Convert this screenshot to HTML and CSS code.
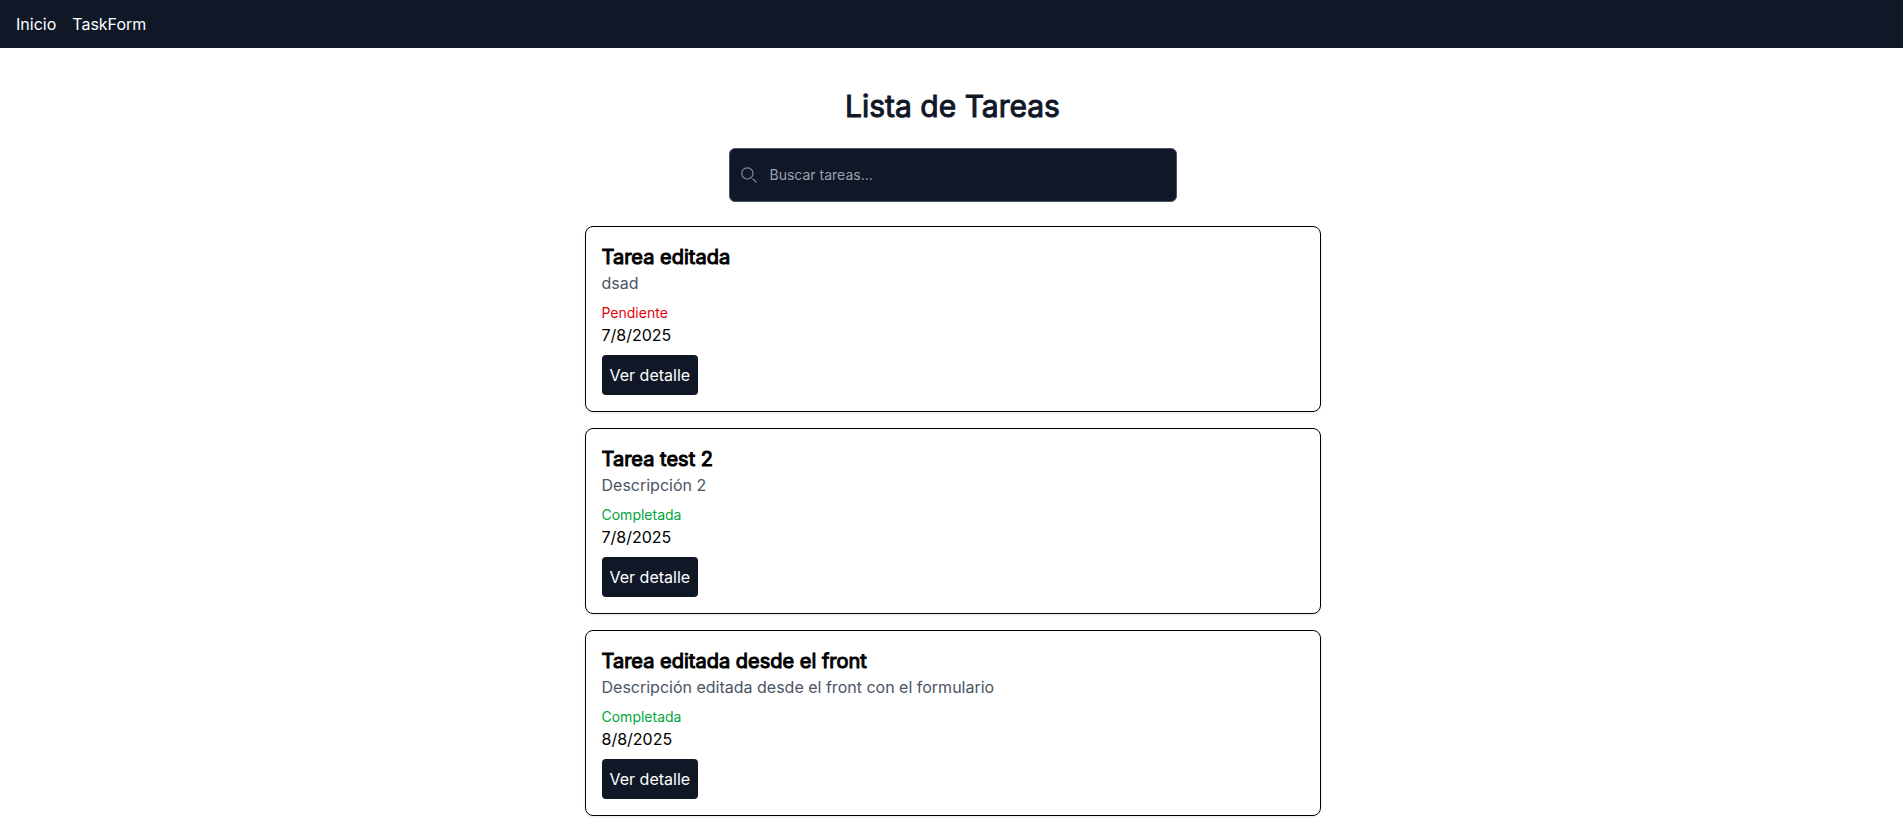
FILE: index.html
```html
<!DOCTYPE html>
<html lang="es">
<head>
  <meta charset="utf-8">
  <meta name="viewport" content="width=device-width, initial-scale=1">
  <title>Lista de Tareas</title>
  <link rel="stylesheet" href="styles.css">
</head>
<body>
  <nav class="navbar">
    <a href="#">Inicio</a>
    <a href="#">TaskForm</a>
  </nav>
  <main class="page">
    <div class="container">
      <h1 class="title">Lista de Tareas</h1>
      <form class="search">
        <label class="search-label" for="search" aria-label="Buscar">
          <svg class="search-icon" viewBox="0 0 20 20" fill="none" aria-hidden="true">
            <path stroke="currentColor" stroke-linecap="round" stroke-linejoin="round" stroke-width="1.5" d="m19 19-4-4m0-7A7 7 0 1 1 1 8a7 7 0 0 1 14 0Z"/>
          </svg>
        </label>
        <input class="search-input" id="search" type="search" placeholder="Buscar tareas...">
      </form>
      <div class="tasks">
        <article class="task">
          <h2 class="task-title">Tarea editada</h2>
          <p class="task-text">dsad</p>
          <p class="status pending">Pendiente</p>
          <p>7/8/2025</p>
          <button class="button" type="button">Ver detalle</button>
        </article>
        <article class="task">
          <h2 class="task-title">Tarea test 2</h2>
          <p class="task-text">Descripción 2</p>
          <p class="status done">Completada</p>
          <p>7/8/2025</p>
          <button class="button" type="button">Ver detalle</button>
        </article>
        <article class="task">
          <h2 class="task-title">Tarea editada desde el front</h2>
          <p class="task-text">Descripción editada desde el front con el formulario</p>
          <p class="status done">Completada</p>
          <p>8/8/2025</p>
          <button class="button" type="button">Ver detalle</button>
        </article>
      </div>
    </div>
  </main>
</body>
</html>
```
FILE: styles.css
```css
* {
  box-sizing: border-box;
  margin: 0;
}

body {
  background: #fff;
  color: #000;
  font-family: Inter, "Liberation Sans", sans-serif;
  font-size: 16px;
  line-height: 24px;
}

.navbar {
  display: flex;
  gap: 16px;
  padding: 12px 16px;
  background: #101828;
}

.navbar a {
  color: #fff;
  text-decoration: none;
}

.page {
  padding: 40px 0 8px 2px;
}

.container {
  max-width: 768px;
  margin: 0 auto;
  padding: 0 16px;
}

.title,
.task-title {
  font-weight: 400;
  -webkit-text-stroke: 1px currentColor;
}

.title {
  color: #101828;
  font-size: 30px;
  line-height: 36px;
  text-align: center;
}

.search {
  position: relative;
  max-width: 448px;
  margin: 24px auto;
}

.search-label {
  position: absolute;
  inset: 0 auto 0 12px;
  display: flex;
  align-items: center;
  color: #848c9b;
}

.search-icon {
  width: 16px;
  height: 16px;
}

.search-input {
  display: block;
  width: 100%;
  padding: 16px 16px 16px 40px;
  border: 1px solid #4a5565;
  border-radius: 6px;
  background: #101828;
  color: #fff;
  font: inherit;
  font-size: 14px;
  line-height: 20px;
  appearance: none;
}

.search-input::placeholder {
  color: #99a1af;
}

.tasks {
  display: grid;
  gap: 16px;
}

.task {
  padding: 16px;
  border: 1px solid #000;
  border-radius: 8px;
  box-shadow: 0 1px 3px rgb(0 0 0 / 10%);
}

.task-title {
  font-size: 20px;
  line-height: 28px;
}

.task-text {
  color: #4a5565;
}

.status {
  margin-top: 8px;
  font-size: 14px;
  line-height: 20px;
}

.pending {
  color: #e7000b;
}

.done {
  color: #00a63e;
}

.button {
  display: block;
  margin-top: 8px;
  padding: 8px;
  border: 0;
  border-radius: 4px;
  background: #101828;
  color: #fff;
  font: inherit;
}
```
